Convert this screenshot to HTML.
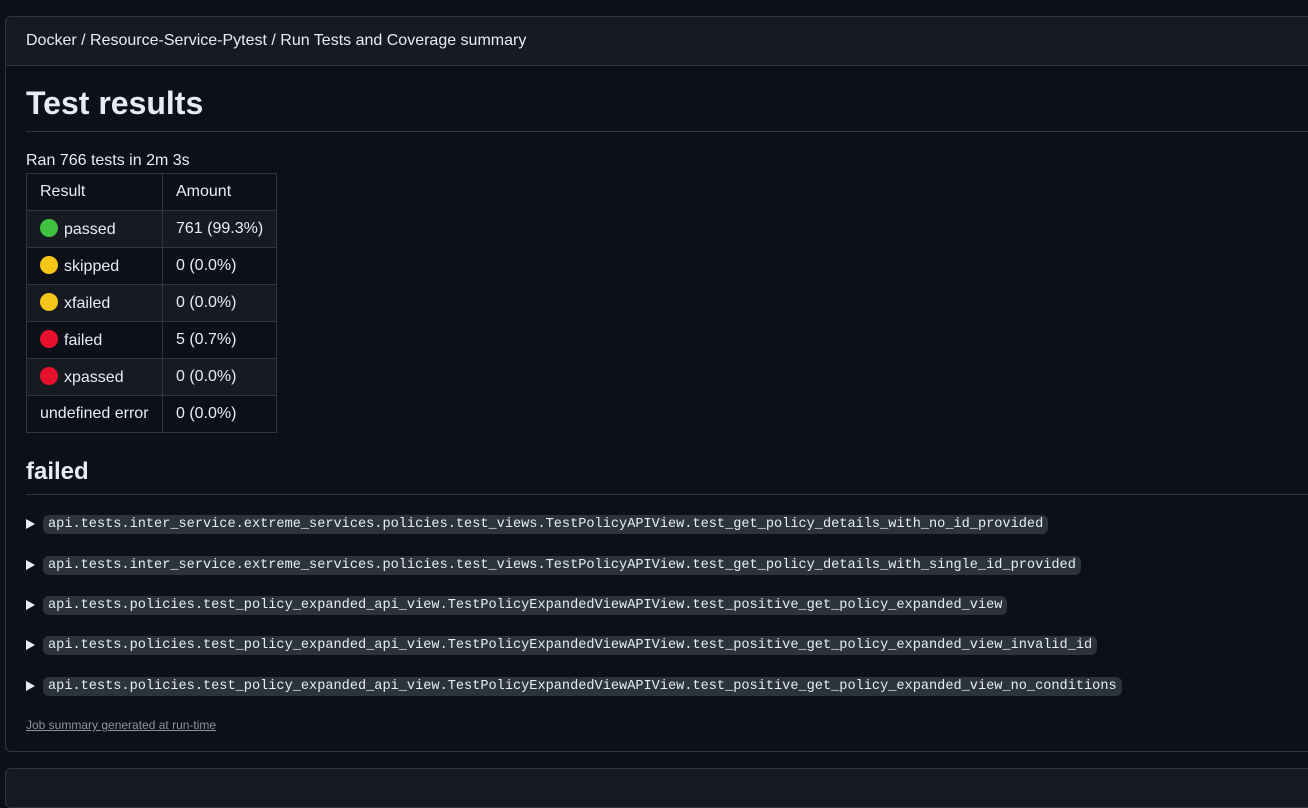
<!DOCTYPE html>
<html><head><meta charset="utf-8"><style>
*{box-sizing:border-box;margin:0;padding:0}
html,body{width:1308px;height:780px;overflow:hidden;background:#0d1117;font-family:"Liberation Sans",sans-serif;color:#e6edf3}
.box{position:absolute;left:5px;top:16px;width:1320px;height:736px;border:1px solid #30363d;border-radius:6px;background:#0d1117}
.hdr{height:49px;background:#161b22;border-bottom:1px solid #30363d;border-radius:6px 6px 0 0;padding:0 0 0 20px;line-height:48px;font-size:16px;color:#e6edf3}
.box2{position:absolute;left:5px;top:768px;width:1320px;height:40px;border:1px solid #30363d;border-radius:6px;background:#161b22}
h1{position:absolute;left:20px;top:68px;font-size:32px;font-weight:bold;width:1300px;padding-bottom:10px;border-bottom:1px solid #30363d;line-height:36px}
.ran{position:absolute;left:20px;top:134px;font-size:16px;line-height:20px}
table{position:absolute;left:20px;top:156px;border-collapse:collapse;font-size:16px}
td{border:1px solid #30363d;height:37px;padding:0 13px;white-space:nowrap}
td:first-child{width:136px}td:last-child{width:114px}
tr:nth-child(even){background:#161b22}
.d{display:inline-block;width:18px;height:18px;border-radius:50%;vertical-align:-3px;margin-right:6px}
.g{background:#3fc23f}.y{background:#f5c518}.r{background:#e8102c}
h2{position:absolute;left:20px;top:441px;font-size:24px;font-weight:bold;width:1300px;padding-bottom:8px;border-bottom:1px solid #30363d;line-height:28px}
.it{position:absolute;left:20px;height:20px;display:flex;align-items:center}
.tri{width:0;height:0;border-left:9px solid #e6edf3;border-top:5px solid transparent;border-bottom:5px solid transparent;margin-right:8px}
code{font-family:"Liberation Mono",monospace;font-size:13.6px;background:#2d333b;border-radius:6px;padding:0 5px;color:#e6edf3;height:19px;line-height:20px;display:inline-block;white-space:nowrap}
.ft{position:absolute;left:20px;top:701px;font-size:12px;color:#8b949e;text-decoration:underline}
</style></head><body>
<div class="box">
<div class="hdr">Docker / Resource-Service-Pytest / Run Tests and Coverage summary</div>
<h1>Test results</h1>
<div class="ran">Ran 766 tests in 2m 3s</div>
<table>
<tr><td>Result</td><td>Amount</td></tr>
<tr><td><span class="d g"></span>passed</td><td>761 (99.3%)</td></tr>
<tr><td><span class="d y"></span>skipped</td><td>0 (0.0%)</td></tr>
<tr><td><span class="d y"></span>xfailed</td><td>0 (0.0%)</td></tr>
<tr><td><span class="d r"></span>failed</td><td>5 (0.7%)</td></tr>
<tr><td><span class="d r"></span>xpassed</td><td>0 (0.0%)</td></tr>
<tr><td>undefined error</td><td>0 (0.0%)</td></tr>
</table>
<h2>failed</h2>
<div class="it" style="top:497px"><span class="tri"></span><code>api.tests.inter_service.extreme_services.policies.test_views.TestPolicyAPIView.test_get_policy_details_with_no_id_provided</code></div>
<div class="it" style="top:538px"><span class="tri"></span><code>api.tests.inter_service.extreme_services.policies.test_views.TestPolicyAPIView.test_get_policy_details_with_single_id_provided</code></div>
<div class="it" style="top:578px"><span class="tri"></span><code>api.tests.policies.test_policy_expanded_api_view.TestPolicyExpandedViewAPIView.test_positive_get_policy_expanded_view</code></div>
<div class="it" style="top:618px"><span class="tri"></span><code>api.tests.policies.test_policy_expanded_api_view.TestPolicyExpandedViewAPIView.test_positive_get_policy_expanded_view_invalid_id</code></div>
<div class="it" style="top:659px"><span class="tri"></span><code>api.tests.policies.test_policy_expanded_api_view.TestPolicyExpandedViewAPIView.test_positive_get_policy_expanded_view_no_conditions</code></div>
<div class="ft">Job summary generated at run-time</div>
</div>
<div class="box2"></div>
</body></html>
